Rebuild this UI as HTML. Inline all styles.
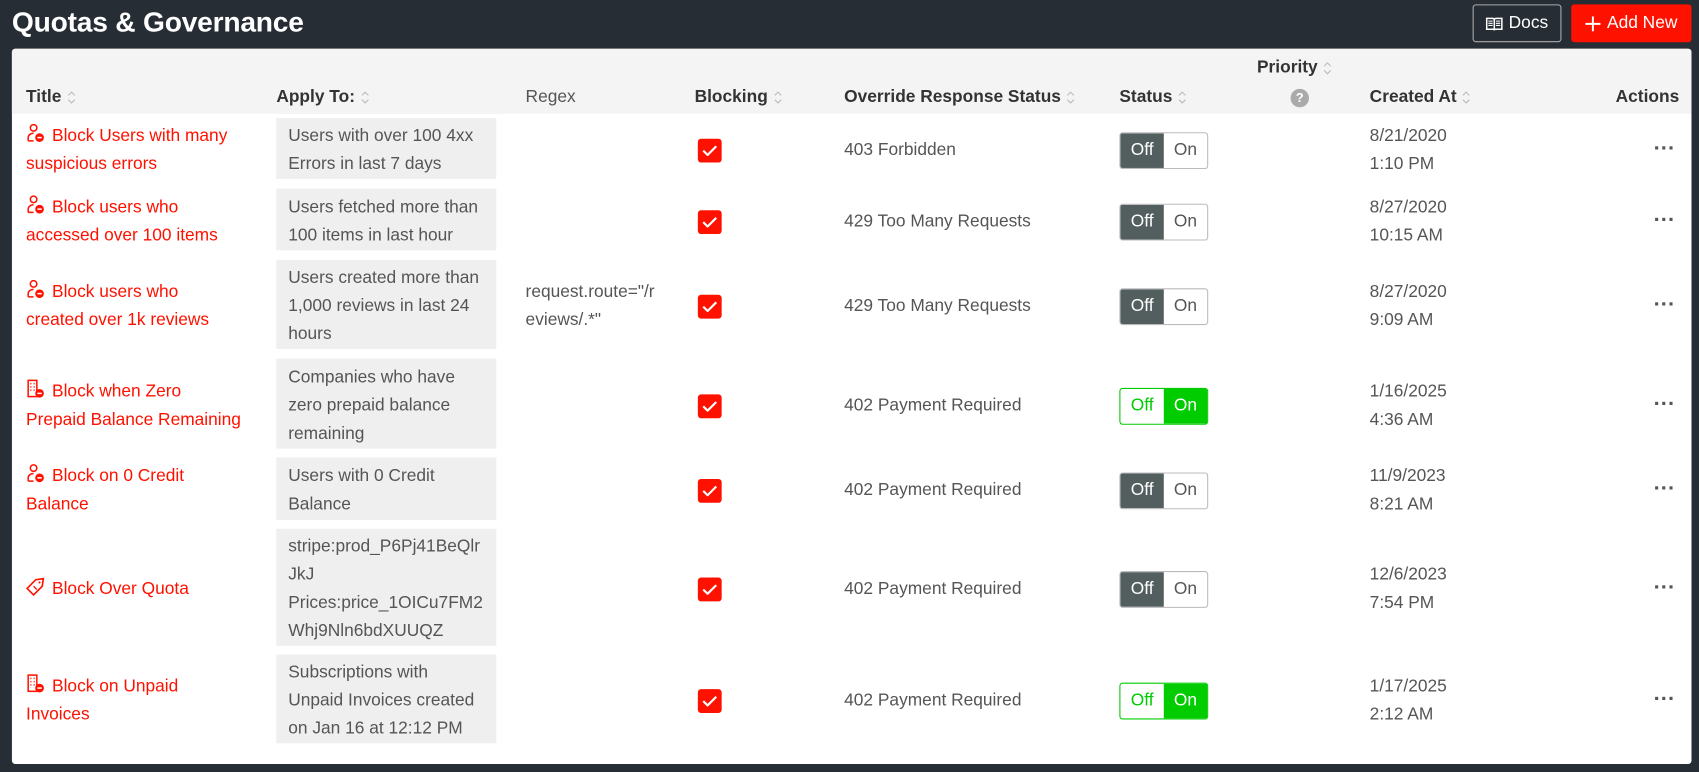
<!DOCTYPE html>
<html><head><meta charset="utf-8"><style>
*{box-sizing:border-box;margin:0;padding:0}
html,body{width:1699px;height:772px;background:#262d35;overflow:hidden}
#w{position:absolute;left:0;top:0;width:1568px;height:712px;transform:scale(1.0836);transform-origin:0 0;font-family:"Liberation Sans",sans-serif;color:#555}
h1{position:absolute;left:11px;top:5px;color:#fff;font-size:26px;font-weight:bold;letter-spacing:-0.2px}
.docs{position:absolute;left:1359px;top:4px;width:82px;height:35px;border:1px solid #aaa;border-radius:3px;color:#fff;font-size:16px;display:flex;align-items:center;justify-content:center;gap:5px}
.add{position:absolute;left:1450px;top:4px;width:111px;height:35px;background:#ff1100;border-radius:3px;color:#fff;font-size:16px;display:flex;align-items:center;justify-content:center;gap:6px}
.card{position:absolute;left:11px;top:45px;width:1550px;height:660px;background:#fff;border-radius:3px}
.head{position:absolute;left:0;top:0;width:1550px;height:60px;background:#f4f4f4;border-radius:3px 3px 0 0}
.th{position:absolute;top:36px;font-size:16px;font-weight:bold;color:#333;white-space:nowrap;display:flex;align-items:center}
.s{margin-left:5px;display:inline-block}
.row{position:absolute;left:0;width:1550px}
.c{position:absolute;top:0;height:100%;display:flex;align-items:center;font-size:16px;line-height:26px}
.c>*{position:relative;top:2px}
.t{left:13px;width:230px;color:#ff1100;white-space:nowrap}
.ap{left:244px;width:203px;top:4px;bottom:4px;height:auto;background:#efefef;padding:4px 11px 0;overflow-wrap:anywhere}
.rg{left:474px;width:122px;word-break:break-all;padding-top:4px}
.cb{left:633px}
.box{width:22px;height:22px;background:#ff1100;border-radius:3px;display:flex;align-items:center;justify-content:center}
.ov{left:768px;padding-top:4px}
.st{left:1022px}
.tg{display:flex;width:82px;height:34px;border:1px solid #bbb;border-radius:3px;overflow:hidden;font-size:16px}
.tg span{flex:1;display:flex;align-items:center;justify-content:center}
.off .a{background:#535f5f;color:#fff}.off .b{color:#555}
.on{border-color:#00cc00}.on .a{color:#00cc00}.on .b{background:#00cc00;color:#fff}
.cr{left:1253px;padding-top:4px}
.ac{left:1515px;font-size:20px;color:#555;font-weight:bold}
.ic{display:inline-block;vertical-align:-2px;margin-right:6px}
</style></head><body><div id="w">
<h1>Quotas &amp; Governance</h1>
<div class="docs"><svg width="16" height="14" viewBox="0 0 16 14"><path d="M1 2h5.5c.8 0 1.5.6 1.5 1.4V13c0-.6-.6-1-1.3-1H1zM15 2H9.5C8.7 2 8 2.6 8 3.4V13c0-.6.6-1 1.3-1H15z" fill="none" stroke="#fff" stroke-width="1.4"/><path d="M2.5 4.5h4M2.5 6.5h4M2.5 8.5h4M9.5 4.5h4M9.5 6.5h4M9.5 8.5h4" stroke="#fff" stroke-width="1"/></svg>Docs</div>
<div class="add"><svg width="14" height="14"><path d="M7 0v14M0 7h14" stroke="#fff" stroke-width="1.8"/></svg>Add New</div>
<div class="card">
<div class="head"></div>
<div class="th" style="left:13px">Title<svg class="s" width="8" height="14"><path d="M1 5l3-3 3 3M1 9l3 3 3-3" fill="none" stroke="#bbb" stroke-width="1"/></svg></div>
<div class="th" style="left:244px">Apply To:<svg class="s" width="8" height="14"><path d="M1 5l3-3 3 3M1 9l3 3 3-3" fill="none" stroke="#bbb" stroke-width="1"/></svg></div>
<div class="th" style="left:474px;font-weight:normal;color:#555">Regex</div>
<div class="th" style="left:630px">Blocking<svg class="s" width="8" height="14"><path d="M1 5l3-3 3 3M1 9l3 3 3-3" fill="none" stroke="#bbb" stroke-width="1"/></svg></div>
<div class="th" style="left:768px">Override Response Status<svg class="s" width="8" height="14"><path d="M1 5l3-3 3 3M1 9l3 3 3-3" fill="none" stroke="#bbb" stroke-width="1"/></svg></div>
<div class="th" style="left:1022px">Status<svg class="s" width="8" height="14"><path d="M1 5l3-3 3 3M1 9l3 3 3-3" fill="none" stroke="#bbb" stroke-width="1"/></svg></div>
<div class="th" style="left:1149px;top:9px">Priority<svg class="s" width="8" height="14"><path d="M1 5l3-3 3 3M1 9l3 3 3-3" fill="none" stroke="#bbb" stroke-width="1"/></svg></div>
<div style="position:absolute;left:1180px;top:37px;width:17px;height:17px;border-radius:50%;background:#aaa;color:#fff;font-size:12px;font-weight:bold;text-align:center;line-height:17px;font-family:'Liberation Sans',sans-serif">?</div>
<div class="th" style="left:1253px">Created At<svg class="s" width="8" height="14"><path d="M1 5l3-3 3 3M1 9l3 3 3-3" fill="none" stroke="#bbb" stroke-width="1"/></svg></div>
<div class="th" style="left:1480px">Actions</div>

<div class="row" style="top:60px;height:64px">
<div class="c t"><div><svg class="ic" width="18" height="18" viewBox="0 0 18 18"><circle cx="7" cy="4" r="3" fill="none" stroke="#f10" stroke-width="1.4"/><path d="M2 16v-3c0-2 2-4 5-4" fill="none" stroke="#f10" stroke-width="1.4"/><path d="M2 16h5" stroke="#f10" stroke-width="1.4"/><circle cx="12.5" cy="13" r="4" fill="#f10"/><path d="M10.5 13h4" stroke="#fff" stroke-width="1.4"/></svg>Block Users with many<br>suspicious errors</div></div>
<div class="c ap">Users with over 100 4xx Errors in last 7 days</div>
<div class="c cb"><div class="box"><svg width="14" height="10"><path d="M1 5l4 4 8-8" fill="none" stroke="#fff" stroke-width="2"/></svg></div></div>
<div class="c ov">403 Forbidden</div>
<div class="c st"><div class="tg off"><span class="a">Off</span><span class="b">On</span></div></div>
<div class="c cr">8/21/2020<br>1:10 PM</div>
<div class="c ac">···</div>
</div>

<div class="row" style="top:125px;height:65px">
<div class="c t"><div><svg class="ic" width="18" height="18" viewBox="0 0 18 18"><circle cx="7" cy="4" r="3" fill="none" stroke="#f10" stroke-width="1.4"/><path d="M2 16v-3c0-2 2-4 5-4" fill="none" stroke="#f10" stroke-width="1.4"/><path d="M2 16h5" stroke="#f10" stroke-width="1.4"/><circle cx="12.5" cy="13" r="4" fill="#f10"/><path d="M10.5 13h4" stroke="#fff" stroke-width="1.4"/></svg>Block users who<br>accessed over 100 items</div></div>
<div class="c ap">Users fetched more than 100 items in last hour</div>
<div class="c cb"><div class="box"><svg width="14" height="10"><path d="M1 5l4 4 8-8" fill="none" stroke="#fff" stroke-width="2"/></svg></div></div>
<div class="c ov">429 Too Many Requests</div>
<div class="c st"><div class="tg off"><span class="a">Off</span><span class="b">On</span></div></div>
<div class="c cr">8/27/2020<br>10:15 AM</div>
<div class="c ac">···</div>
</div>

<div class="row" style="top:191px;height:90px">
<div class="c t"><div><svg class="ic" width="18" height="18" viewBox="0 0 18 18"><circle cx="7" cy="4" r="3" fill="none" stroke="#f10" stroke-width="1.4"/><path d="M2 16v-3c0-2 2-4 5-4" fill="none" stroke="#f10" stroke-width="1.4"/><path d="M2 16h5" stroke="#f10" stroke-width="1.4"/><circle cx="12.5" cy="13" r="4" fill="#f10"/><path d="M10.5 13h4" stroke="#fff" stroke-width="1.4"/></svg>Block users who<br>created over 1k reviews</div></div>
<div class="c ap">Users created more than 1,000 reviews in last 24 hours</div>
<div class="c rg">request.route="/reviews/.*"</div>
<div class="c cb"><div class="box"><svg width="14" height="10"><path d="M1 5l4 4 8-8" fill="none" stroke="#fff" stroke-width="2"/></svg></div></div>
<div class="c ov">429 Too Many Requests</div>
<div class="c st"><div class="tg off"><span class="a">Off</span><span class="b">On</span></div></div>
<div class="c cr">8/27/2020<br>9:09 AM</div>
<div class="c ac">···</div>
</div>

<div class="row" style="top:282px;height:91px">
<div class="c t"><div><svg class="ic" width="18" height="18" viewBox="0 0 18 18"><rect x="2" y="1" width="8" height="15" fill="none" stroke="#f10" stroke-width="1.4"/><path d="M4 4h1M7 4h1M4 7h1M7 7h1M4 10h1M7 10h1" stroke="#f10" stroke-width="1.4"/><circle cx="12.5" cy="13" r="4" fill="#f10"/><path d="M10.5 13h4" stroke="#fff" stroke-width="1.4"/></svg>Block when Zero<br>Prepaid Balance Remaining</div></div>
<div class="c ap">Companies who have zero prepaid balance remaining</div>
<div class="c cb"><div class="box"><svg width="14" height="10"><path d="M1 5l4 4 8-8" fill="none" stroke="#fff" stroke-width="2"/></svg></div></div>
<div class="c ov">402 Payment Required</div>
<div class="c st"><div class="tg on"><span class="a">Off</span><span class="b">On</span></div></div>
<div class="c cr">1/16/2025<br>4:36 AM</div>
<div class="c ac">···</div>
</div>

<div class="row" style="top:373px;height:66px">
<div class="c t"><div><svg class="ic" width="18" height="18" viewBox="0 0 18 18"><circle cx="7" cy="4" r="3" fill="none" stroke="#f10" stroke-width="1.4"/><path d="M2 16v-3c0-2 2-4 5-4" fill="none" stroke="#f10" stroke-width="1.4"/><path d="M2 16h5" stroke="#f10" stroke-width="1.4"/><circle cx="12.5" cy="13" r="4" fill="#f10"/><path d="M10.5 13h4" stroke="#fff" stroke-width="1.4"/></svg>Block on 0 Credit<br>Balance</div></div>
<div class="c ap">Users with 0 Credit Balance</div>
<div class="c cb"><div class="box"><svg width="14" height="10"><path d="M1 5l4 4 8-8" fill="none" stroke="#fff" stroke-width="2"/></svg></div></div>
<div class="c ov">402 Payment Required</div>
<div class="c st"><div class="tg off"><span class="a">Off</span><span class="b">On</span></div></div>
<div class="c cr">11/9/2023<br>8:21 AM</div>
<div class="c ac">···</div>
</div>

<div class="row" style="top:439px;height:116px">
<div class="c t"><div><svg class="ic" width="18" height="18" viewBox="0 0 18 18"><path d="M1 11l8-8 7-1-1 7-8 8z" fill="none" stroke="#f10" stroke-width="1.5"/><circle cx="12.5" cy="5.5" r="1" fill="#f10"/><path d="M7 9l3 3" stroke="#f10" stroke-width="1.2"/></svg>Block Over Quota</div></div>
<div class="c ap">stripe:prod_P6Pj41BeQlrJkJ Prices:price_1OICu7FM2Whj9Nln6bdXUUQZ</div>
<div class="c cb"><div class="box"><svg width="14" height="10"><path d="M1 5l4 4 8-8" fill="none" stroke="#fff" stroke-width="2"/></svg></div></div>
<div class="c ov">402 Payment Required</div>
<div class="c st"><div class="tg off"><span class="a">Off</span><span class="b">On</span></div></div>
<div class="c cr">12/6/2023<br>7:54 PM</div>
<div class="c ac">···</div>
</div>

<div class="row" style="top:555px;height:90px">
<div class="c t"><div><svg class="ic" width="18" height="18" viewBox="0 0 18 18"><rect x="2" y="1" width="8" height="15" fill="none" stroke="#f10" stroke-width="1.4"/><path d="M4 4h1M7 4h1M4 7h1M7 7h1M4 10h1M7 10h1" stroke="#f10" stroke-width="1.4"/><circle cx="12.5" cy="13" r="4" fill="#f10"/><path d="M10.5 13h4" stroke="#fff" stroke-width="1.4"/></svg>Block on Unpaid<br>Invoices</div></div>
<div class="c ap">Subscriptions with Unpaid Invoices created on Jan 16 at 12:12 PM</div>
<div class="c cb"><div class="box"><svg width="14" height="10"><path d="M1 5l4 4 8-8" fill="none" stroke="#fff" stroke-width="2"/></svg></div></div>
<div class="c ov">402 Payment Required</div>
<div class="c st"><div class="tg on"><span class="a">Off</span><span class="b">On</span></div></div>
<div class="c cr">1/17/2025<br>2:12 AM</div>
<div class="c ac">···</div>
</div>
</div>
</div></body></html>
